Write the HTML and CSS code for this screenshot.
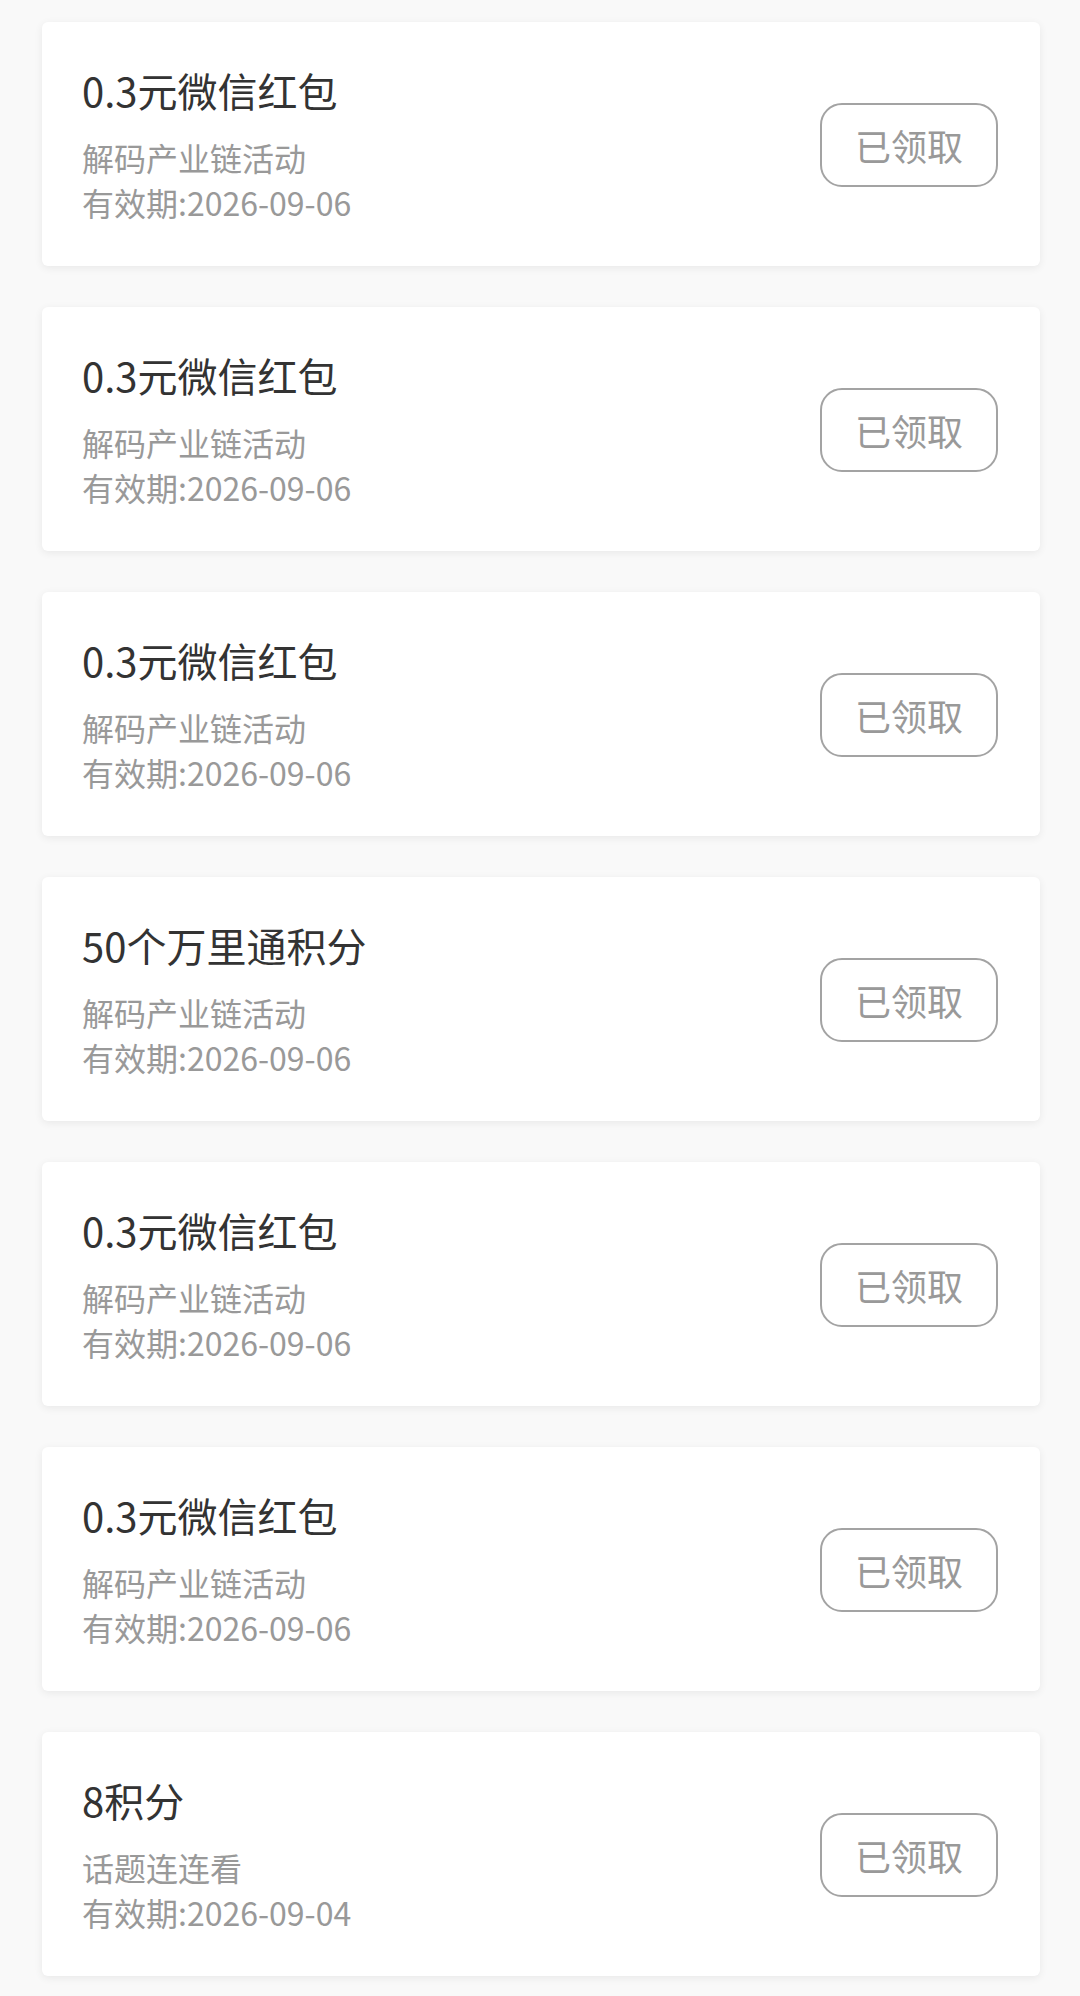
FILE: index.html
```html
<!DOCTYPE html>
<html lang="zh-CN">
<head>
    <meta charset="UTF-8">
    <meta name="viewport" content="width=device-width, initial-scale=1.0">
    <title>我的奖品</title>
    <link rel="stylesheet" href="styles.css">
</head>
<body>
    <div class="prize-list">
        <div class="prize-card">
            <div class="prize-info">
                <div class="prize-name">0.3元微信红包</div>
                <div class="prize-source">解码产业链活动</div>
                <div class="prize-date">有效期:2026-09-06</div>
            </div>
            <button class="prize-btn" type="button">已领取</button>
        </div>

        <div class="prize-card">
            <div class="prize-info">
                <div class="prize-name">0.3元微信红包</div>
                <div class="prize-source">解码产业链活动</div>
                <div class="prize-date">有效期:2026-09-06</div>
            </div>
            <button class="prize-btn" type="button">已领取</button>
        </div>

        <div class="prize-card">
            <div class="prize-info">
                <div class="prize-name">0.3元微信红包</div>
                <div class="prize-source">解码产业链活动</div>
                <div class="prize-date">有效期:2026-09-06</div>
            </div>
            <button class="prize-btn" type="button">已领取</button>
        </div>

        <div class="prize-card">
            <div class="prize-info">
                <div class="prize-name">50个万里通积分</div>
                <div class="prize-source">解码产业链活动</div>
                <div class="prize-date">有效期:2026-09-06</div>
            </div>
            <button class="prize-btn" type="button">已领取</button>
        </div>

        <div class="prize-card">
            <div class="prize-info">
                <div class="prize-name">0.3元微信红包</div>
                <div class="prize-source">解码产业链活动</div>
                <div class="prize-date">有效期:2026-09-06</div>
            </div>
            <button class="prize-btn" type="button">已领取</button>
        </div>

        <div class="prize-card">
            <div class="prize-info">
                <div class="prize-name">0.3元微信红包</div>
                <div class="prize-source">解码产业链活动</div>
                <div class="prize-date">有效期:2026-09-06</div>
            </div>
            <button class="prize-btn" type="button">已领取</button>
        </div>

        <div class="prize-card">
            <div class="prize-info">
                <div class="prize-name">8积分</div>
                <div class="prize-source">话题连连看</div>
                <div class="prize-date">有效期:2026-09-04</div>
            </div>
            <button class="prize-btn" type="button">已领取</button>
        </div>
    </div>
</body>
</html>
```

FILE: styles.css
```css
body {
    margin: 0;
    background-color: #f9f9f9;
    font-family: "Noto Sans CJK SC", "Noto Sans", sans-serif;
}

.prize-list {
    display: flex;
    flex-direction: column;
    gap: 41px;
    padding: 22px 40px 40px 42px;
}

.prize-card {
    display: flex;
    align-items: center;
    justify-content: space-between;
    padding: 40px 42px 41px 40px;
    background-color: #fff;
    border-radius: 6px;
    box-shadow: 0 2px 8px rgba(0, 0, 0, 0.07);
}

.prize-name {
    font-size: 40px;
    line-height: 56px;
    color: #333;
    margin-bottom: 17px;
}

.prize-source,
.prize-date {
    font-size: 32px;
    line-height: 45px;
    color: #999;
}

.prize-btn {
    width: 178px;
    height: 84px;
    margin-top: 2px;
    padding: 0;
    font-family: inherit;
    font-size: 36px;
    color: #999;
    background-color: #fff;
    border: 2px solid #a3a3a3;
    border-radius: 22px;
}
```
